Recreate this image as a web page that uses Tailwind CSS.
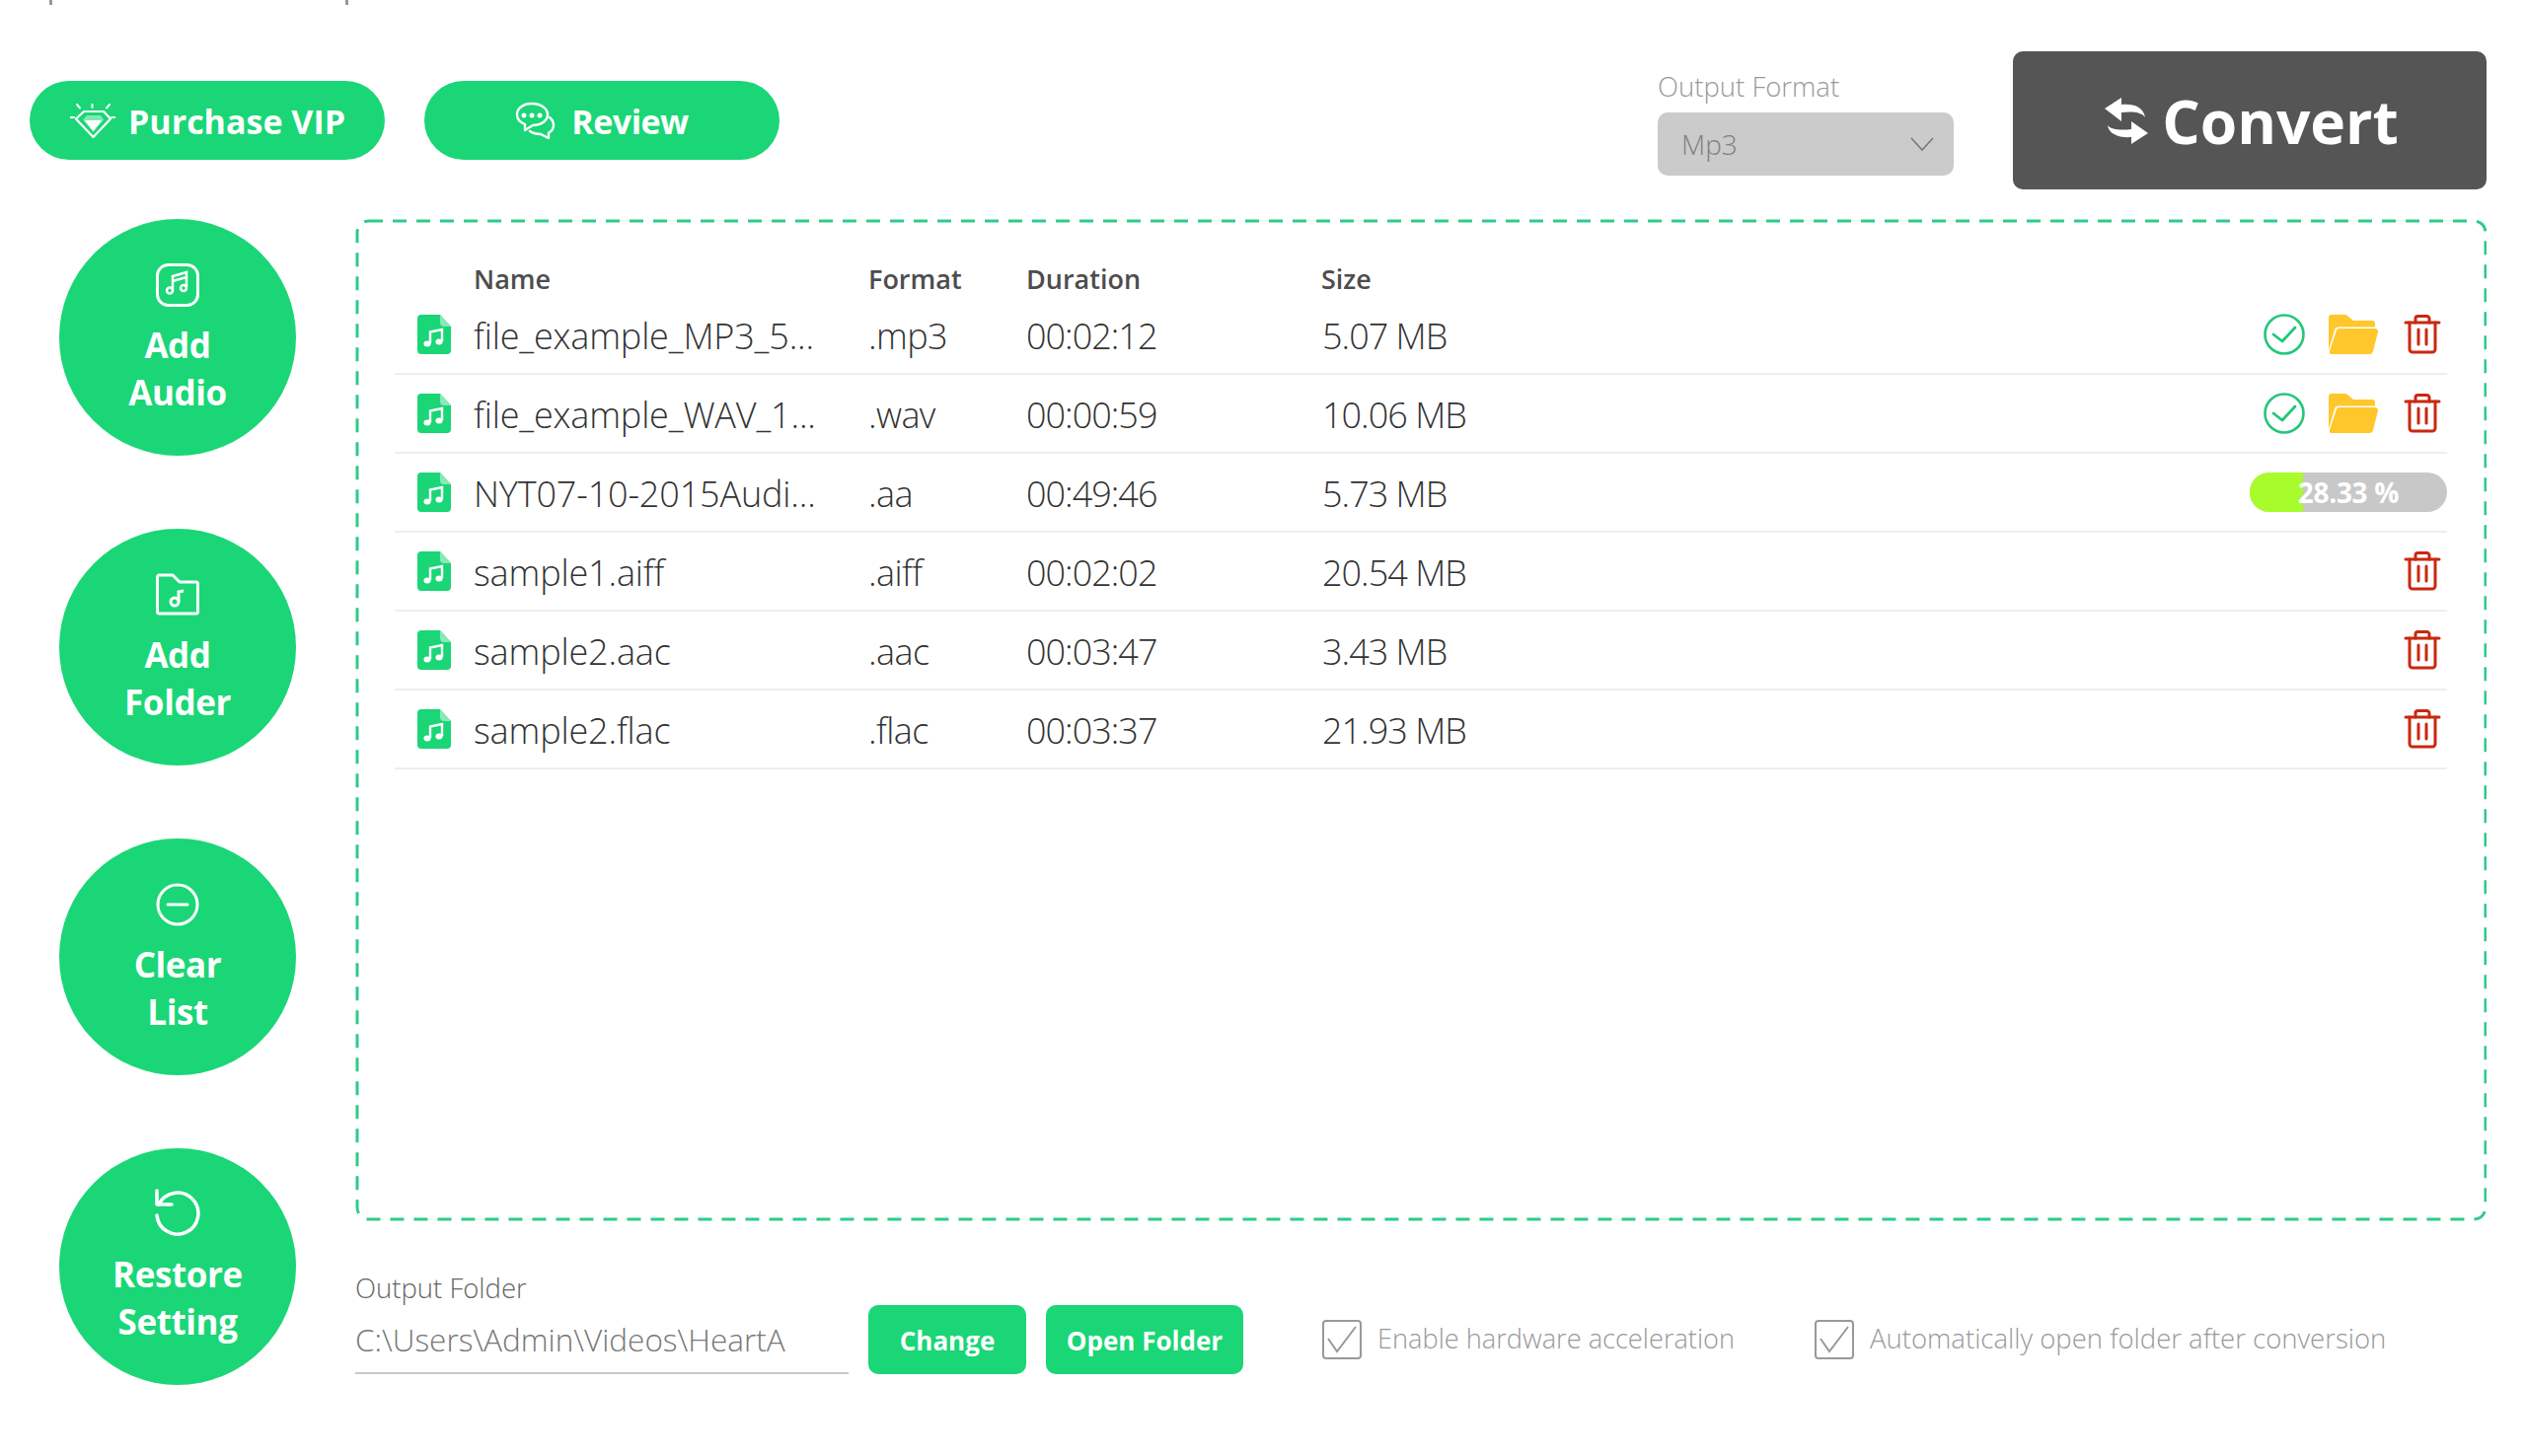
<!DOCTYPE html>
<html lang="en">
<head>
    <meta charset="UTF-8">
    <title>Audio Converter</title>
    <script src="https://cdn.jsdelivr.net/npm/@tailwindcss/browser@4"></script>
</head>
<body class="bg-white">

    <!-- shared icons -->
    <svg class="hidden">
        <symbol id="i-file" viewBox="0 0 34 40">
            <path d="M4 0H23L34 12V36a4 4 0 0 1-4 4H4a4 4 0 0 1-4-4V4a4 4 0 0 1 4-4Z" fill="#1ad676"/>
            <path d="M23 0L34 12H27a4 4 0 0 1-4-4Z" fill="#8be8b8"/>
            <path d="M13 29V17.500L25 15V27" fill="none" stroke="#fff" stroke-width="2.400"/>
            <ellipse cx="10" cy="29.500" rx="3.600" ry="3" fill="#fff"/>
            <ellipse cx="22" cy="27.500" rx="3.600" ry="3" fill="#fff"/>
        </symbol>
        <symbol id="i-check" viewBox="0 0 42 42">
            <circle cx="21" cy="21" r="19.500" fill="none" stroke="#22c77a" stroke-width="2.600"/>
            <path d="M10 21L19 28L32 14" fill="none" stroke="#22c77a" stroke-width="2.800" stroke-linecap="round" stroke-linejoin="round"/>
        </symbol>
        <symbol id="i-folder" viewBox="0 0 50 40">
            <path d="M3 0H17a3 3 0 0 1 2 1L25 6H44a3 3 0 0 1 3 3V12.500H10a4 4 0 0 0-4 3L0 36V3a3 3 0 0 1 3-3Z" fill="#ffc72c"/>
            <path d="M10 14H47a3 3 0 0 1 3 3.500L45 37a4 4 0 0 1-4 3H3a2 2 0 0 1-2-3L7.500 17a4 4 0 0 1 2.500-3Z" fill="#ffc72c"/>
        </symbol>
        <symbol id="i-trash" viewBox="0 0 38 40">
            <g fill="none" stroke="#c9280f" stroke-width="3" stroke-linecap="round" stroke-linejoin="round">
                <path d="M2 8H36"/>
                <path d="M12 8V4a2.500 2.500 0 0 1 2.500-2.500H23.500A2.500 2.500 0 0 1 26 4V8"/>
                <path d="M6 8V35a3 3 0 0 0 3 3H29a3 3 0 0 0 3-3V8"/>
                <path d="M15 15V30"/>
                <path d="M23 15V30"/>
            </g>
        </symbol>
    </svg>

    <div class="w-[2560px] h-[1476px] overflow-hidden text-[#333] font-['Open_Sans','Noto_Sans',sans-serif]">

        <!-- window edge -->
        <div class="ml-[50px] w-[303px] h-[5px] border-x-[3px] border-[#999]"></div>

        <!-- top bar -->
        <div class="flex pl-[30px] pr-[40px] pt-[47px] pb-[30px]">
            <button class="mt-[30px] w-[360px] h-[80px] rounded-full bg-[#1ad676] text-white text-[34px] font-bold flex items-center pl-[41px] gap-[13px]">
                <svg class="w-[46px] h-[35px]" viewBox="12 9 46 35" fill="none" stroke="#fff" stroke-width="2" stroke-linecap="round" stroke-linejoin="round">
                    <path d="M34.500 9V13M19 10L22 13.500M52 10L49 13.500M12.500 23H16M54 23H57.500"/>
                    <path d="M26 17H46L53 24.500L35.500 43L18 24.500Z" stroke-width="2.200"/>
                    <path d="M29 21H43L46 25.500L35.500 38L25 25.500Z" fill="#fff" fill-opacity="0.450" stroke="none"/>
                    <path d="M27 26H44L35.500 37Z" fill="#fff" stroke="none"/>
                </svg>
                <span class="pt-[3px]">Purchase VIP</span>
            </button>
            <button class="mt-[30px] ml-[40px] w-[360px] h-[80px] rounded-full bg-[#1ad676] text-white text-[34px] font-bold flex items-center justify-center gap-[15px]">
                <svg class="w-[42px] h-[38px]" viewBox="10 8 42 38" fill="none" stroke="#fff" stroke-width="2.400" stroke-linecap="round" stroke-linejoin="round">
                    <path d="M27 10C18 10 12 15 12 21C12 26 15 29 20 31L20 37L28 32C37 32 43 27 43 21C43 15 36 10 27 10Z"/>
                    <path d="M45 24C49 27 50 32 48 36C47 38 45 39 44 40L44 45L36 41C32 41 28 40 25 38"/>
                    <circle cx="19" cy="22" r="1.300" fill="#fff"/>
                    <circle cx="27" cy="22" r="1.300" fill="#fff"/>
                    <circle cx="35" cy="22" r="1.300" fill="#fff"/>
                </svg>
                <span class="pt-[3px] tracking-[-0.5px]">Review</span>
            </button>

            <div class="ml-auto w-[300px]">
                <p class="mt-[18px] h-[44px] leading-[36px] text-[27.5px] font-light text-[#999]">Output Format</p>
                <div class="w-[300px] h-[64px] rounded-[10px] bg-[#cbcbcb] flex items-center justify-between pl-[24px] pr-[20px]">
                    <span class="text-[28px] font-light text-[#808080]">Mp3</span>
                    <svg class="w-[24px] h-[14px]" viewBox="0 0 24 14" fill="none" stroke="#777" stroke-width="1.600"><path d="M1 1L12 13L23 1"/></svg>
                </div>
            </div>

            <button class="ml-[60px] w-[480px] h-[140px] rounded-[10px] bg-[#555] text-white text-[60.500px] font-bold flex items-center justify-center gap-[14px] pl-[4px]">
                <svg class="w-[44px] h-[47px]" viewBox="9 9 44 47" fill="#fff">
                    <path d="M9 20L26 9V16C38 15 48 18 50 29C46 23 36 23 26 24V33Z"/>
                    <path d="M53 45L36 33V41C26 42 16 42 12 37C13 46 24 50 36 49V56Z"/>
                </svg>
                <span class="pt-[2px]">Convert</span>
            </button>
        </div>

        <div class="flex">
            <!-- side buttons -->
            <div class="w-[360px] pl-[60px] flex flex-col gap-[74px]">
                <button class="w-[240px] h-[240px] rounded-full bg-[#1ad676] text-white flex flex-col items-center pt-[45px] text-[35px] leading-[48px] font-bold tracking-[-0.4px]">
                    <svg class="w-[44px] h-[44px] mb-[15px] shrink-0" viewBox="0 0 44 44" fill="none" stroke="#fff" stroke-width="3">
                        <rect x="1.500" y="1.500" width="41" height="41" rx="11"/>
                        <path d="M17 27V13L31 9V24M17 18L31 14" stroke-width="2.500"/>
                        <circle cx="14" cy="27.500" r="3" stroke-width="2.500"/>
                        <circle cx="28" cy="25" r="3" stroke-width="2.500"/>
                    </svg>
                    <span>Add</span>
                    <span>Audio</span>
                </button>
                <button class="w-[240px] h-[240px] rounded-full bg-[#1ad676] text-white flex flex-col items-center pt-[45px] text-[35px] leading-[48px] font-bold tracking-[-0.4px]">
                    <svg class="w-[44px] h-[44px] mb-[15px] shrink-0" viewBox="0 0 44 44" fill="none" stroke="#fff" stroke-width="3">
                        <path d="M3.500 2H17L24 9H40.500A2 2 0 0 1 42.500 11V39a2 2 0 0 1-2 2H3.500a2 2 0 0 1-2-2V4a2 2 0 0 1 2-2Z" stroke-linejoin="round"/>
                        <circle cx="19" cy="29" r="4"/>
                        <path d="M23 29V19L28 18"/>
                    </svg>
                    <span>Add</span>
                    <span>Folder</span>
                </button>
                <button class="w-[240px] h-[240px] rounded-full bg-[#1ad676] text-white flex flex-col items-center pt-[45px] text-[35px] leading-[48px] font-bold tracking-[-0.4px]">
                    <svg class="w-[44px] h-[44px] mb-[15px] shrink-0" viewBox="0 0 44 44" fill="none" stroke="#fff" stroke-width="3">
                        <circle cx="22" cy="22" r="20"/>
                        <path d="M12 22H32" stroke-linecap="round"/>
                    </svg>
                    <span>Clear</span>
                    <span>List</span>
                </button>
                <button class="w-[240px] h-[240px] rounded-full bg-[#1ad676] text-white flex flex-col items-center pt-[45px] text-[35px] leading-[48px] font-bold tracking-[-0.4px]">
                    <svg class="w-[46px] h-[48px] -mt-[4px] mb-[15px] shrink-0" viewBox="13 5 46 48" fill="none" stroke="#fff" stroke-width="3.500" stroke-linecap="round" stroke-linejoin="round">
                        <path d="M15 7V21H30"/>
                        <path d="M17 21A21 21 0 1 1 15 32"/>
                    </svg>
                    <span>Restore</span>
                    <span>Setting</span>
                </button>
            </div>

            <div class="w-[2160px]">
                <!-- file list -->
                <div class="relative h-[1016px] pl-[40px] pr-[40px] pt-[45px]">
                    <svg class="absolute left-0 top-0 w-[2160px] h-[1016px]" viewBox="0 0 2160 1016" fill="none">
                        <rect x="2" y="2" width="2157" height="1012" rx="12" stroke="#2ecb87" stroke-width="3" stroke-dasharray="14 10"/>
                    </svg>

                    <div class="flex items-center h-[33px] pl-[80px] text-[27px] font-semibold text-[#4d4d4d]">
                        <span class="w-[400px]">Name</span>
                        <span class="w-[160px]">Format</span>
                        <span class="w-[299px]">Duration</span>
                        <span>Size</span>
                    </div>

                    <div id="rows"></div>
                </div>

                <!-- output folder -->
                <div class="flex items-end mt-[50px]">
                    <div class="w-[500px]">
                        <p class="h-[37px] leading-[36px] text-[27.5px] font-light text-[#666]">Output Folder</p>
                        <div class="h-[68px] border-b-2 border-[#c8c8c8] flex items-center text-[31.500px] font-light text-[#777]">C:\Users\Admin\Videos\HeartA</div>
                    </div>
                    <button class="ml-[20px] w-[160px] h-[70px] rounded-[10px] bg-[#1ad676] text-white text-[26px] font-bold pt-[2px]">Change</button>
                    <button class="ml-[20px] w-[200px] h-[70px] rounded-[10px] bg-[#1ad676] text-white text-[26px] font-bold pt-[2px]">Open Folder</button>
                    <div class="ml-[80px] w-[499px] h-[70px] flex items-center gap-[16px] text-[27.200px] font-light text-[#999]">
                        <svg class="w-[40px] h-[40px]" viewBox="0 0 40 40" fill="none" stroke="#999" stroke-width="2"><rect x="1" y="1" width="38" height="38" rx="3"/><path d="M6 19L15 32L34 7"/></svg>
                        <span class="pb-[2px]">Enable hardware acceleration</span>
                    </div>
                    <div class="w-[640px] h-[70px] flex items-center gap-[16px] text-[27.500px] font-light text-[#999]">
                        <svg class="w-[40px] h-[40px]" viewBox="0 0 40 40" fill="none" stroke="#999" stroke-width="2"><rect x="1" y="1" width="38" height="38" rx="3"/><path d="M6 19L15 32L34 7"/></svg>
                        <span class="pb-[2px]">Automatically open folder after conversion</span>
                    </div>
                </div>
            </div>
        </div>
    </div>

    <script>
        const archivos = [
            { nombre: "file_example_MP3_5...", ext: ".mp3", dur: "00:02:12", size: "5.07 MB", estado: "hecho" },
            { nombre: "file_example_WAV_1...", ext: ".wav", dur: "00:00:59", size: "10.06 MB", estado: "hecho" },
            { nombre: "NYT07-10-2015Audi...", ext: ".aa", dur: "00:49:46", size: "5.73 MB", estado: "progreso", pct: 28.33 },
            { nombre: "sample1.aiff", ext: ".aiff", dur: "00:02:02", size: "20.54 MB" },
            { nombre: "sample2.aac", ext: ".aac", dur: "00:03:47", size: "3.43 MB" },
            { nombre: "sample2.flac", ext: ".flac", dur: "00:03:37", size: "21.93 MB" }
        ];

        const iconoBorrar = `<svg class="w-[38px] h-[40px]"><use href="#i-trash"/></svg>`;

        function acciones(a) {
            if (a.estado === "hecho") {
                return `<div class="ml-auto pr-[6px] flex items-center">
                    <svg class="w-[42px] h-[42px]"><use href="#i-check"/></svg>
                    <svg class="ml-[24px] w-[50px] h-[40px]"><use href="#i-folder"/></svg>
                    <svg class="ml-[26px] w-[38px] h-[40px]"><use href="#i-trash"/></svg>
                </div>`;
            }
            if (a.estado === "progreso") {
                return `<div class="relative ml-auto w-[200px] h-[40px] rounded-full bg-[#c8c8c8] overflow-hidden flex items-center justify-center text-white text-[28px] font-bold tracking-[-0.3px]">
                    <div class="absolute left-0 top-0 h-full bg-[#a8fc2c]" style="width: 27%"></div>
                    <span class="relative">${a.pct} %</span>
                </div>`;
            }
            return `<div class="ml-auto pr-[6px] flex items-center">${iconoBorrar}</div>`;
        }

        document.getElementById("rows").innerHTML = archivos.map(a => `
            <div class="flex items-center h-[80px] border-b-2 border-[#eee] pl-[23px] text-[36px] font-light">
                <svg class="w-[34px] h-[40px] mr-[23px]"><use href="#i-file"/></svg>
                <span class="w-[400px] pt-[3px] tracking-[-0.15px]">${a.nombre}</span>
                <span class="w-[160px] pt-[3px] tracking-[-0.6px]">${a.ext}</span>
                <span class="w-[300px] pt-[3px] tracking-[-1px]">${a.dur}</span>
                <span class="pt-[3px] tracking-[-1px]">${a.size}</span>
                ${acciones(a)}
            </div>`).join("");
    </script>

</body>
</html>
